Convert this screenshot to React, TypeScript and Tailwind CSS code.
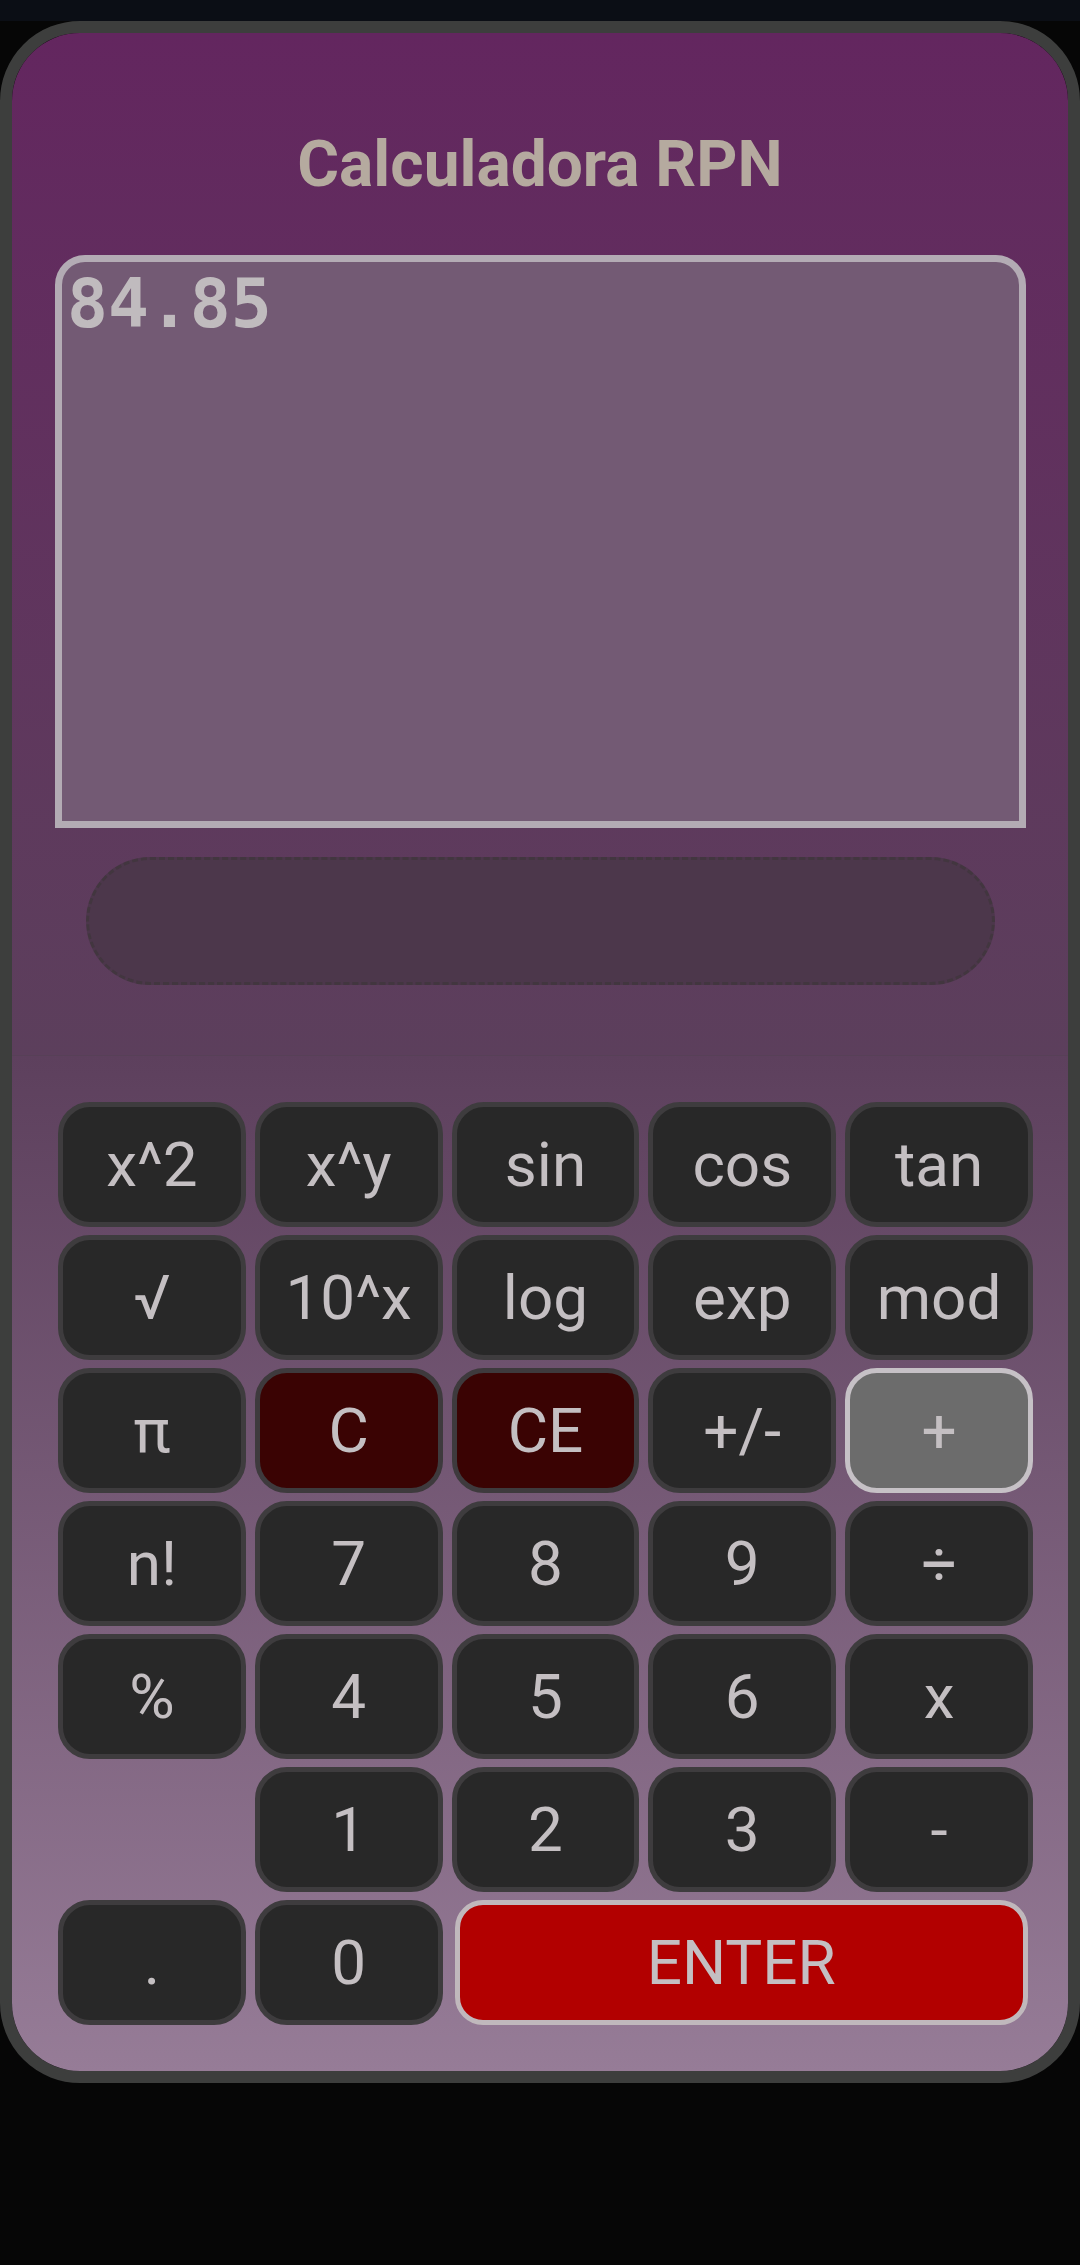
import React from 'react';

type Key = {
  label: string;
  kind?: 'fn' | 'clear' | 'op' | 'enter' | 'blank';
  span?: number;
};

const keys: Key[] = [
  { label: 'x^2' }, { label: 'x^y' }, { label: 'sin' }, { label: 'cos' }, { label: 'tan' },
  { label: '√' }, { label: '10^x' }, { label: 'log' }, { label: 'exp' }, { label: 'mod' },
  { label: 'π' }, { label: 'C', kind: 'clear' }, { label: 'CE', kind: 'clear' }, { label: '+/-' }, { label: '+', kind: 'op' },
  { label: 'n!' }, { label: '7' }, { label: '8' }, { label: '9' }, { label: '÷' },
  { label: '%' }, { label: '4' }, { label: '5' }, { label: '6' }, { label: 'x' },
  { label: '', kind: 'blank' }, { label: '1' }, { label: '2' }, { label: '3' }, { label: '-' },
  { label: '.' }, { label: '0' }, { label: 'ENTER', kind: 'enter', span: 3 },
];

function CalcKey({ k }: { k: Key }) {
  if (k.kind === 'blank') return <div />;

  let look = 'bg-[#282828] border-[#3e3c3e] rounded-[32px]';
  if (k.kind === 'clear') look = 'bg-[#3a0303] border-[#3e3a3d] rounded-[32px]';
  if (k.kind === 'op') look = 'bg-[#6c6c6c] border-[#c6c1c6] rounded-[32px]';
  if (k.kind === 'enter') look = 'col-span-3 ml-[3px] mr-[5px] bg-[#b20000] border-[#c0b8bc] rounded-[28px]';

  return (
    <button
      type="button"
      className={`flex items-center justify-center border-[5px] text-[62px] leading-none text-[#c4bfc2] ${look}`}
    >
      {k.label}
    </button>
  );
}

export default function App() {
  return (
    <div className="w-[1080px] h-[2265px] bg-[#060606] font-['Roboto',sans-serif]">
      {/* status strip */}
      <div className="h-[21px] bg-[#0b0e15]" />

      {/* calculator body */}
      <div className="h-[2062px] border-[12px] border-[#3d3e3d] rounded-[80px] overflow-hidden flex flex-col">
        {/* top: title, stack display, message pill */}
        <div className="h-[1022px] bg-linear-to-b from-[#63265f] to-[#5c3f5c] flex flex-col items-center">
          <h1 className="mt-[94px] text-[64px] leading-[75px] font-bold text-[#b5aa9f]">
            Calculadora RPN
          </h1>

          <div className="mt-[53px] w-[971px] h-[573px] ml-[1px] border-[7px] border-[#b3abb4] rounded-t-[30px] bg-[#735a74] pl-[5px] pt-[2px]">
            <div className="font-['DejaVu_Sans_Mono',monospace] font-bold text-[68px] leading-[80px] text-[#c0bbbe]">
              84.85
            </div>
          </div>

          <div className="mt-[29px] w-[909px] h-[128px] rounded-full bg-[#4c374b] border-[3px] border-dashed border-[#42363f]" />
        </div>

        {/* keypad */}
        <div className="flex-1 border-t border-[#574057] bg-linear-to-b from-[#5d405d] to-[#967c97] pl-[46px] pr-[35px] pt-[46px]">
          <div className="grid grid-cols-5 auto-rows-[125px] gap-x-[9px] gap-y-[8px]">
            {keys.map((k, i) => (
              <CalcKey key={i} k={k} />
            ))}
          </div>
        </div>
      </div>
    </div>
  );
}
